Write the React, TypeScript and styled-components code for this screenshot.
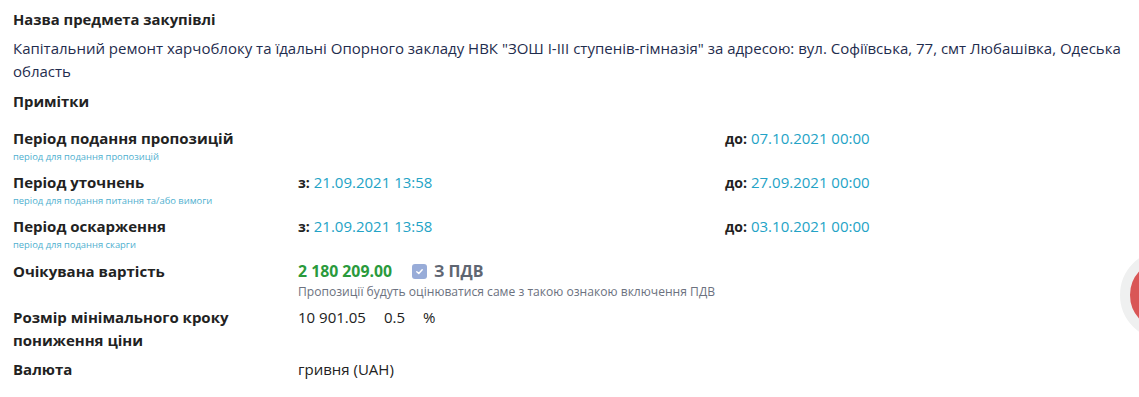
import React from "react";
import styled, { createGlobalStyle } from "styled-components";

const Global = createGlobalStyle`
  html, body { margin: 0; padding: 0; background: #fff; }
  body { font-family: "Open Sans", "Noto Sans", sans-serif; font-size: 15px; color: #222; overflow: hidden; }
`;

const Page = styled.div`
  position: relative;
  width: 1139px;
  height: 397px;
  overflow: hidden;
  padding: 9px 0 0 13px;
  box-sizing: border-box;
`;

const Heading = styled.div`
  font-weight: 700;
  font-size: 14.8px;
  line-height: 20px;
  color: #222;
`;

const Description = styled.div`
  margin-top: 8px;
  font-size: 15px;
  line-height: 23px;
  color: #1f2d4e;
  padding-right: 6px;
`;

const NotesHeading = styled(Heading)`
  margin-top: 8px;
`;

const Row = styled.div<{ $mt: number }>`
  display: grid;
  grid-template-columns: 285px 427px 1fr;
  margin-top: ${(p) => p.$mt}px;
`;

const Label = styled.div<{ $lh?: number }>`
  font-weight: 700;
  font-size: 15px;
  line-height: ${(p) => p.$lh ?? 22}px;
  color: #222;
`;

const Hint = styled.div`
  font-size: 9.4px;
  line-height: 12px;
  color: #4fb0cf;
  margin-top: 2px;
`;

const Cell = styled.div`
  font-size: 15px;
  line-height: 22px;
`;

const Prefix = styled.span`
  font-weight: 700;
  font-size: 14px;
  color: #222;
  margin-right: 4px;
`;

const DateText = styled.span`
  color: #23a3c6;
`;

const PriceLine = styled.div`
  display: flex;
  align-items: center;
  line-height: 22px;
`;

const Amount = styled.span`
  font-weight: 700;
  color: #2a9a3c;
  font-size: 15.8px;
`;

const Check = styled.span`
  display: inline-flex;
  align-items: center;
  justify-content: center;
  width: 15px;
  height: 15px;
  border-radius: 3px;
  background: #98acd8;
  margin-left: 20px;
  margin-right: 7px;
`;

const Vat = styled.span`
  font-weight: 700;
  color: #5f6672;
  font-size: 16px;
`;

const Note = styled.div`
  font-size: 12.1px;
  line-height: 17px;
  color: #6c7280;
  margin-top: 1px;
`;

const Plain = styled.div`
  display: flex;
  gap: 18px;
  color: #222;
  font-size: 15px;
  line-height: 22px;
`;

const Fab = styled.div`
  position: absolute;
  left: 1120px;
  top: 250px;
  width: 70px;
  height: 70px;
  border-radius: 50%;
  border: 10px solid #eff0f0;
  background: #d95656;
`;

const periods = [
  { label: "Період подання пропозицій", hint: "період для подання пропозицій", from: "", to: "07.10.2021 00:00" },
  { label: "Період уточнень", hint: "період для подання питання та/або вимоги", from: "21.09.2021 13:58", to: "27.09.2021 00:00" },
  { label: "Період оскарження", hint: "період для подання скарги", from: "21.09.2021 13:58", to: "03.10.2021 00:00" },
];

export default function App() {
  return (
    <>
      <Global />
      <Page>
        <Heading>Назва предмета закупівлі</Heading>
        <Description>
          Капітальний ремонт харчоблоку та їдальні Опорного закладу НВК "ЗОШ І-ІІІ ступенів-гімназія" за адресою: вул. Софіївська, 77, смт Любашівка, Одеська область
        </Description>
        <NotesHeading>Примітки</NotesHeading>
        {periods.map((p, i) => (
          <Row key={p.label} $mt={i === 0 ? 16 : 8}>
            <div>
              <Label>{p.label}</Label>
              <Hint>{p.hint}</Hint>
            </div>
            <Cell>
              {p.from && (
                <>
                  <Prefix>з:</Prefix>
                  <DateText>{p.from}</DateText>
                </>
              )}
            </Cell>
            <Cell>
              <Prefix>до:</Prefix>
              <DateText>{p.to}</DateText>
            </Cell>
          </Row>
        ))}
        <Row $mt={9}>
          <Label>Очікувана вартість</Label>
          <div style={{ gridColumn: "2 / 4" }}>
            <PriceLine>
              <Amount>2 180 209.00</Amount>
              <Check>
                <svg width="9" height="9" viewBox="0 0 10 10">
                  <path d="M2 5.2 L4.2 7.2 L8 3" fill="none" stroke="#fff" strokeWidth="1.6" strokeLinecap="round" strokeLinejoin="round" />
                </svg>
              </Check>
              <Vat>З ПДВ</Vat>
            </PriceLine>
            <Note>Пропозиції будуть оцінюватися саме з такою ознакою включення ПДВ</Note>
          </div>
        </Row>
        <Row $mt={6}>
          <Label $lh={23}>Розмір мінімального кроку<br />пониження ціни</Label>
          <Plain>
            <span>10 901.05</span>
            <span>0.5</span>
            <span>%</span>
          </Plain>
        </Row>
        <Row $mt={6}>
          <Label>Валюта</Label>
          <Plain>гривня (UAH)</Plain>
        </Row>
        <Fab />
      </Page>
    </>
  );
}
